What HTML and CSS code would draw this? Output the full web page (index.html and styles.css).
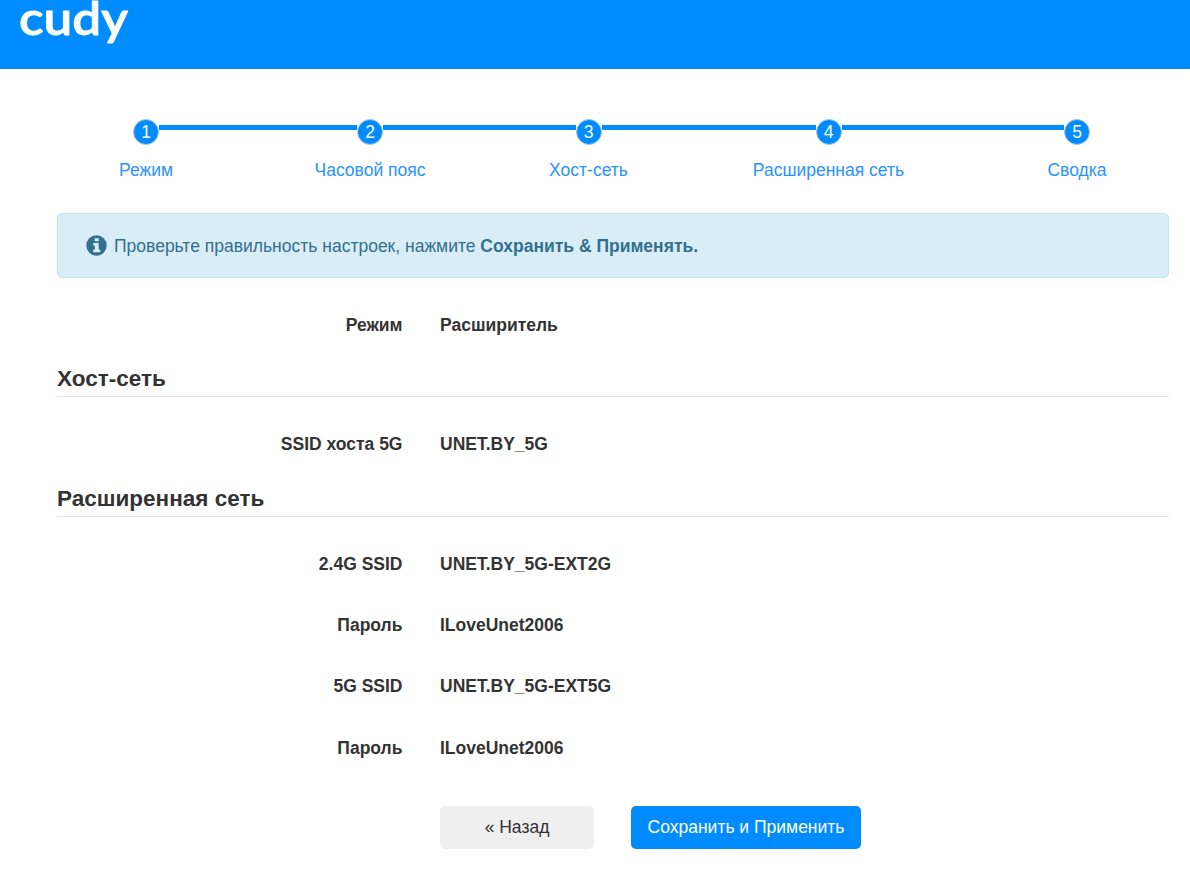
FILE: index.html
```
<!DOCTYPE html>
<html lang="ru">
  <head>
    <meta charset="UTF-8" />
    <meta name="viewport" content="width=device-width, initial-scale=1.0" />
    <title>Cudy</title>
    <link rel="stylesheet" href="styles.css">
  </head>
  <body>
    <header>
      <svg class="logo" width="120" height="50" viewBox="0 0 120 50">
        <text x="0" y="35" textLength="109" lengthAdjust="spacingAndGlyphs">cudy</text>
      </svg>
    </header>

    <main>
      <ol class="steps">
        <li><span class="nummer">1</span><p>Режим</p></li>
        <li><span class="nummer">2</span><p>Часовой пояс</p></li>
        <li><span class="nummer">3</span><p>Хост-сеть</p></li>
        <li><span class="nummer">4</span><p>Расширенная сеть</p></li>
        <li><span class="nummer">5</span><p>Сводка</p></li>
      </ol>

      <div class="alert">
        <svg class="info" width="21" height="21" viewBox="0 0 21 21">
          <circle cx="10.5" cy="10.5" r="10.2" fill="#31708f" />
          <path fill="#d9edf7" d="M8.7 3.2h4v3h-4zM7.2 8h5.5v6.7h1.6v2.5H7.2v-2.5h1.6v-4.2H7.2z" />
        </svg>
        <p>Проверьте правильность настроек, нажмите <strong>Сохранить &amp; Применять.</strong></p>
      </div>

      <dl>
        <dt>Режим</dt>
        <dd>Расширитель</dd>
      </dl>

      <h2>Хост-сеть</h2>
      <dl>
        <dt>SSID хоста 5G</dt>
        <dd>UNET.BY_5G</dd>
      </dl>

      <h2>Расширенная сеть</h2>
      <dl>
        <dt>2.4G SSID</dt>
        <dd>UNET.BY_5G-EXT2G</dd>
        <dt>Пароль</dt>
        <dd>ILoveUnet2006</dd>
        <dt>5G SSID</dt>
        <dd>UNET.BY_5G-EXT5G</dd>
        <dt>Пароль</dt>
        <dd>ILoveUnet2006</dd>
      </dl>

      <div class="knapper">
        <button class="back">« Назад</button>
        <button class="save">Сохранить и Применить</button>
      </div>
    </main>
  </body>
</html>
```
FILE: styles.css
```
* {
  box-sizing: border-box;
  margin: 0;
  padding: 0;
}

body {
  font-family: "Liberation Sans", Arial, sans-serif;
  font-size: 17.5px;
  line-height: 25px;
  color: #333;
  background: #fff;
}

header {
  height: 69px;
  background: #008cff;
}

.logo {
  display: block;
  margin-left: 19px;
  overflow: visible;
}

.logo text {
  font-family: Lato, sans-serif;
  font-size: 46px;
  font-weight: 600;
  fill: #fff;
  stroke: #fff;
  stroke-width: 0.8px;
  stroke-linejoin: round;
}

main {
  padding: 50px 21px 0 57px;
}

.steps {
  display: grid;
  grid-template-columns: 178fr 270fr 167fr 313fr 184fr;
  list-style: none;
  color: #2a93ff;
  text-align: center;
}

.steps li {
  display: grid;
  grid-template-columns: 1fr 26px 1fr;
}

/* the line runs out from both sides of each circle */
.steps li::before,
.steps li::after {
  content: "";
  height: 5px;
  margin-top: 6px;
  background: #008cff;
  grid-row: 1;
}

.steps li::before {
  grid-column: 1;
}

.steps li::after {
  grid-column: 3;
}

.steps li:first-child::before,
.steps li:last-child::after {
  background: none;
}

.nummer {
  grid-column: 2;
  grid-row: 1;
  height: 26px;
  border: 1px solid #b5c7d6;
  border-radius: 50%;
  background: #008cff;
  color: #fff;
  line-height: 25px;
}

.steps p {
  grid-column: 1 / 4;
  margin-top: 13px;
}

.alert {
  display: flex;
  align-items: center;
  height: 65px;
  margin-top: 30px;
  padding-left: 28px;
  border: 1px solid #bce8f1;
  border-radius: 5px;
  background: #d9edf7;
  color: #31708f;
}

.info {
  margin-right: 7px;
}

.alert p {
  padding-top: 1px;
}

dl {
  display: grid;
  grid-template-columns: 345.5px 1fr;
  column-gap: 37.5px;
  padding-top: 16px;
  font-weight: bold;
}

dt,
dd {
  height: 61.2px;
  line-height: 62px;
}

dt {
  text-align: right;
}

h2 {
  height: 42.3px;
  border-bottom: 1px solid #e5e5e5;
  font-size: 22.5px;
  line-height: 48px;
}

.knapper {
  display: flex;
  gap: 37px;
  margin: 28px 0 0 383px;
}

button {
  height: 43px;
  border: 0;
  border-radius: 5px;
  font: inherit;
}

.back {
  width: 154px;
  background: #efefef;
  color: #333;
}

.save {
  width: 230px;
  background: #008cff;
  color: #fff;
}
```
